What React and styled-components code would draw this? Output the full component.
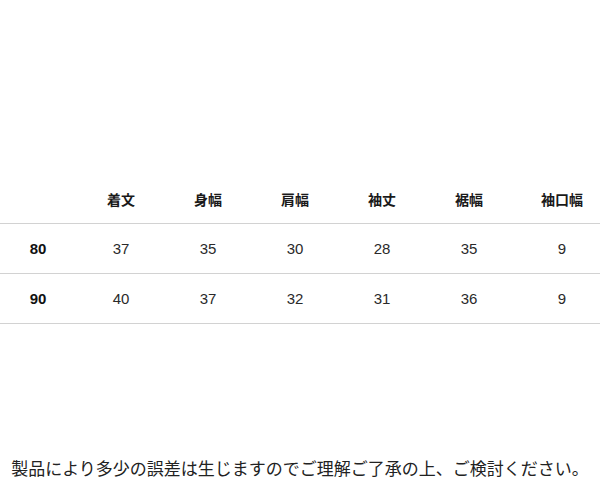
import React from 'react'
import styled, { createGlobalStyle } from 'styled-components'

const GlobalStyle = createGlobalStyle`
  html, body {
    margin: 0;
    padding: 0;
    background: #ffffff;
  }
`

const headers = ["着文", "身幅", "肩幅", "袖丈", "裾幅", "袖口幅"]
const rows = [
  { size: "80", values: [37, 35, 30, 28, 35, 9] },
  { size: "90", values: [40, 37, 32, 31, 36, 9] },
]

function App() {
  return (
    <Page>
      <GlobalStyle />
      <SizeTable>
        <Row>
          <Cell />
          {headers.map((h, i) => (
            <HeadCell key={h} $last={i === headers.length - 1}>{h}</HeadCell>
          ))}
        </Row>
        {rows.map((r) => (
          <Row key={r.size}>
            <SizeCell>{r.size}</SizeCell>
            {r.values.map((v, i) => (
              <Cell key={i} $last={i === r.values.length - 1}>{v}</Cell>
            ))}
          </Row>
        ))}
      </SizeTable>
      <Note>製品により多少の誤差は生じますのでご理解ご了承の上、ご検討ください。</Note>
    </Page>
  )
}

const Page = styled.div`
  width: 600px;
  height: 500px;
  display: flex;
  flex-direction: column;
  background: #fff;
  overflow: hidden;
`

const SizeTable = styled.div`
  margin-top: 174px;
  display: flex;
  flex-direction: column;
`

const Row = styled.div`
  display: grid;
  grid-template-columns: 76px 90px 84px 90px 84px 90px 86px;
  height: 50px;
  align-items: center;
  border-bottom: 1px solid #d2d2d2;
  box-sizing: border-box;
`

const Cell = styled.div`
  text-align: center;
  font-family: "Liberation Sans", Arial, sans-serif;
  font-size: 15px;
  color: #2a2a2a;
  padding-left: ${(p) => (p.$last ? "10px" : "0")};
`

const HeadCell = styled(Cell)`
  font-family: "Noto Sans CJK JP", sans-serif;
  font-size: 14px;
  font-weight: 700;
  color: #1a1a1a;
`

const SizeCell = styled(Cell)`
  font-weight: 700;
  color: #111;
`

const Note = styled.p`
  margin: 134px 0 0;
  text-align: center;
  font-family: "Noto Sans CJK JP", sans-serif;
  font-size: 17px;
  line-height: 20px;
  color: #222;
  white-space: nowrap;
`

export default App
